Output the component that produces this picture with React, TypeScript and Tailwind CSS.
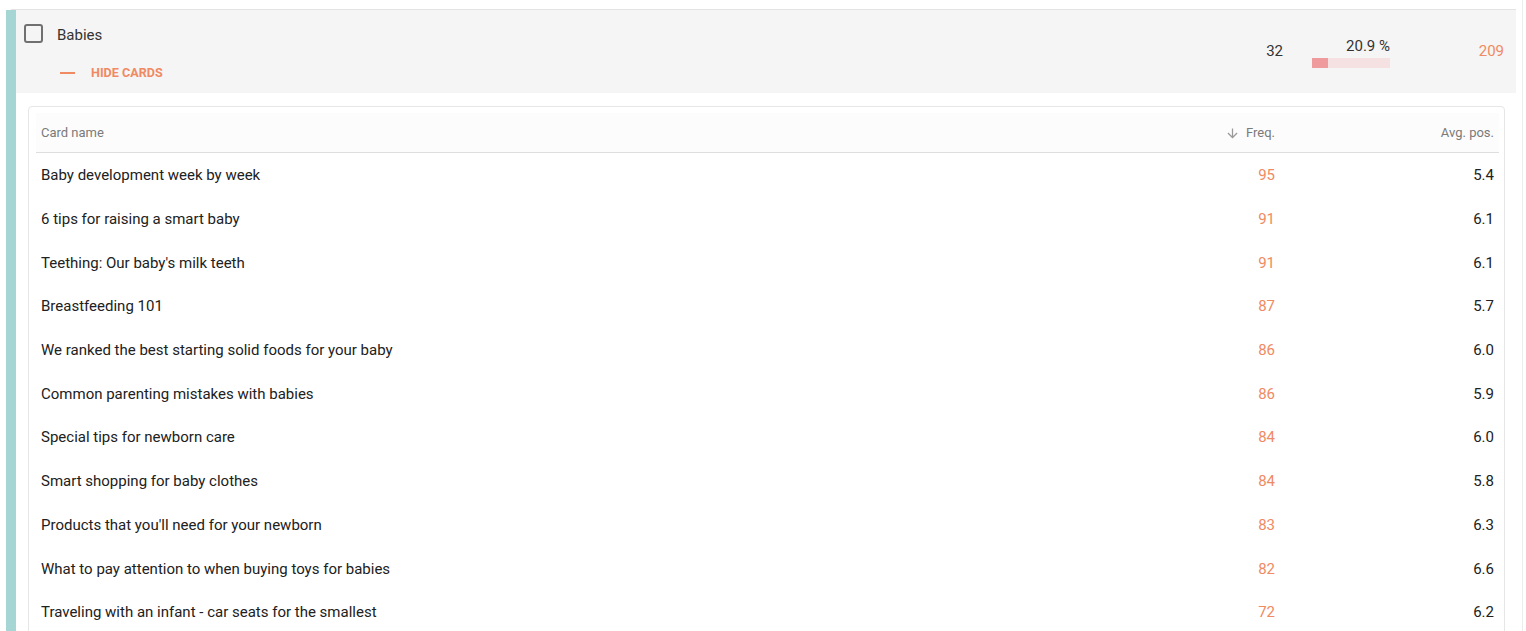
import React from "react";

const rows: [string, number, string][] = [
  ["Baby development week by week", 95, "5.4"],
  ["6 tips for raising a smart baby", 91, "6.1"],
  ["Teething: Our baby's milk teeth", 91, "6.1"],
  ["Breastfeeding 101", 87, "5.7"],
  ["We ranked the best starting solid foods for your baby", 86, "6.0"],
  ["Common parenting mistakes with babies", 86, "5.9"],
  ["Special tips for newborn care", 84, "6.0"],
  ["Smart shopping for baby clothes", 84, "5.8"],
  ["Products that you'll need for your newborn", 83, "6.3"],
  ["What to pay attention to when buying toys for babies", 82, "6.6"],
  ["Traveling with an infant - car seats for the smallest", 72, "6.2"],
];

export default function App() {
  return (
    <div
      className="w-[1526px] h-[631px] overflow-hidden bg-white flex"
      style={{ fontFamily: "Roboto, 'Liberation Sans', sans-serif" }}
    >
      <div className="w-[1522px] flex flex-col shrink-0">
        <div className="h-[9px] shrink-0" />
        <div className="ml-[11px] w-[1505px] h-px bg-[#e3e3e3] shrink-0" />
        <div className="ml-[6px] w-[1510px] flex shrink-0">
          <div className="w-[10px] bg-[#a6d6d4] shrink-0" />
          <div className="flex-1 flex flex-col">
            {/* group header */}
            <div className="h-[83px] bg-[#f5f5f5] flex items-stretch shrink-0">
              <div className="pl-[8px] pt-[14px] flex flex-col">
                <div className="flex items-center h-[19px]">
                  <div className="w-[19px] h-[19px] border-2 border-[#707070] rounded-[3px]" />
                  <span className="ml-[14px] mt-[3px] text-[15px] text-[#333333] leading-none">
                    Babies
                  </span>
                </div>
                <div className="flex items-center mt-[24px] ml-[36px]">
                  <div className="w-[15px] h-[2px] bg-[#f08a62]" />
                  <span className="ml-[16px] text-[12.6px] font-bold text-[#f08a62] leading-none">
                    HIDE CARDS
                  </span>
                </div>
              </div>
              <div className="flex-1" />
              <div className="flex items-center">
                <span className="text-[15px] text-[#333333] leading-none">32</span>
              </div>
              <div className="ml-[29px] w-[78px] flex flex-col pt-[29px]">
                <div className="text-right text-[15px] text-[#333333] leading-none">20.9 %</div>
                <div className="mt-[4px] h-[10px] bg-[#f5e1e2] flex">
                  <div className="w-[16px] bg-[#ef9a9c]" />
                </div>
              </div>
              <div className="w-[126px] pr-[12px] flex items-center justify-end">
                <span className="text-[15px] text-[#f08a62] leading-none">209</span>
              </div>
            </div>
            {/* card */}
            <div className="mt-[13px] ml-[12px] w-[1477px] h-[600px] shrink-0 border border-[#e6e6e6] rounded-[4px] bg-white pt-[6px] pl-[7px] pr-[5px]">
              <div className="h-[40px] bg-[#fcfcfc] border-b border-[#dedede] flex items-center px-[5px] text-[13px] text-[#7a7a7a]">
                <div className="flex-1">Card name</div>
                <div className="flex items-center">
                  <svg width="15" height="15" viewBox="0 0 24 24" className="mr-[6px] mt-[2px]">
                    <path
                      d="M20 12l-1.41-1.41L13 16.17V4h-2v12.17l-5.58-5.59L4 12l8 8 8-8z"
                      fill="#9a9a9a"
                    />
                  </svg>
                  <span>Freq.</span>
                </div>
                <div className="w-[219px] text-right">Avg. pos.</div>
              </div>
              <div className="pt-[1px]">
                {rows.map(([name, freq, avg], i) => (
                  <div
                    key={i}
                    className="h-[43.7px] flex items-center px-[5px] text-[15px] leading-none"
                  >
                    <div className="flex-1 text-[#212121]">{name}</div>
                    <div className="text-[#f08a62]">{freq}</div>
                    <div className="w-[219px] text-right text-[#212121]">{avg}</div>
                  </div>
                ))}
              </div>
            </div>
          </div>
        </div>
      </div>
      <div className="w-px bg-[#ececec] shrink-0" />
    </div>
  );
}
